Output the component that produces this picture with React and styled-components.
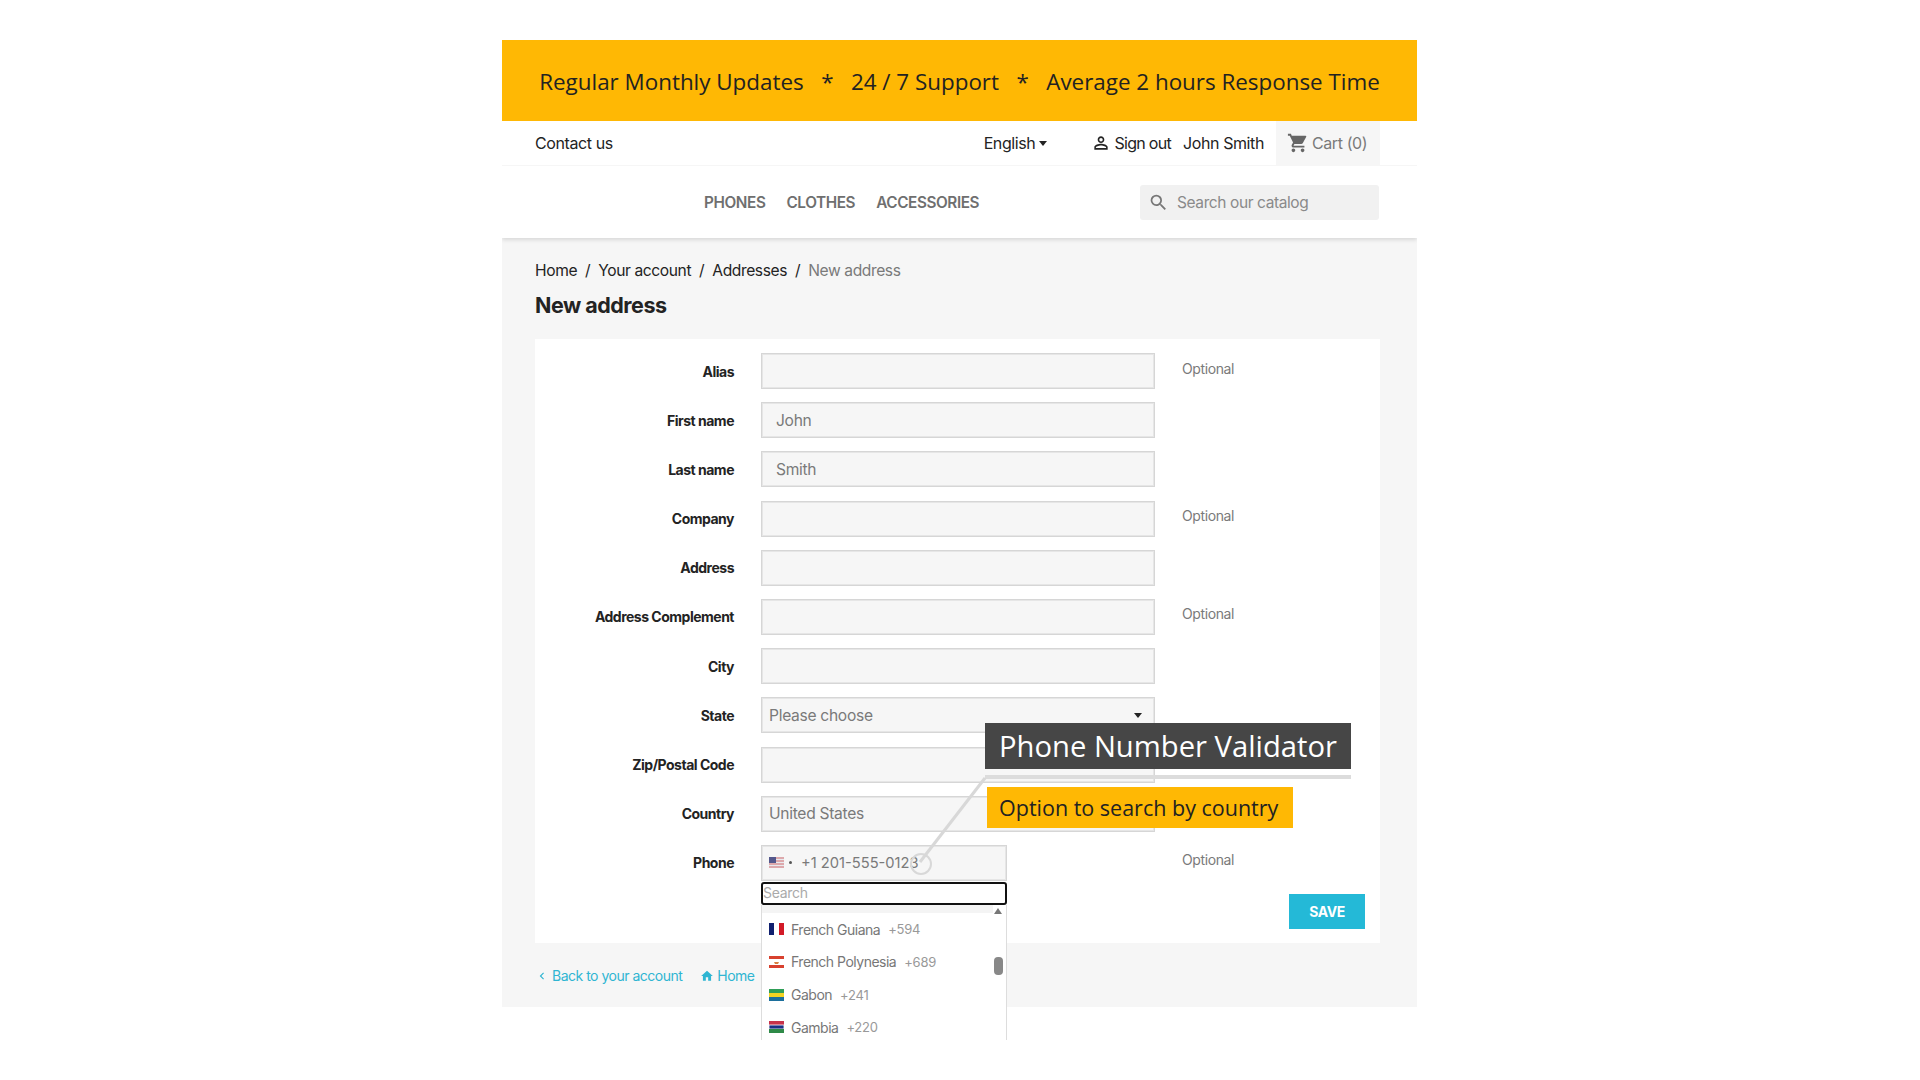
import React from 'react';
import styled, { createGlobalStyle } from 'styled-components';
import { MdPersonOutline, MdShoppingCart, MdSearch, MdHome, MdChevronLeft } from 'react-icons/md';

const Global = createGlobalStyle`
  html, body { margin: 0; background: #fff; }
  body { height: 1080px; overflow: hidden; font-family: Inter, "Liberation Sans", sans-serif; }
  * { box-sizing: border-box; }
`;

const Page = styled.div`
  width: 915px;
  margin: 40px 0 0 502px;
  background: #f6f6f6;
`;

const Banner = styled.div`
  height: 81px;
  padding-top: 1px;
  background: #ffb804;
  color: #222;
  font: 400 22.4px "Open Sans", sans-serif;
  display: flex;
  align-items: center;
  justify-content: center;
  white-space: pre;
`;

const Header = styled.header`
  background: #fff;
  box-shadow: 0 2px 4px rgba(0, 0, 0, 0.12);
  clip-path: inset(0 0 -8px 0);
  position: relative;
`;

const TopRow = styled.div`
  height: 45px;
  display: flex;
  align-items: center;
  padding: 0 37px 0 33px;
  border-bottom: 1px solid #f6f6f6;
  color: #232323;
  font-size: 16px;
  letter-spacing: -0.4px;
`;

const Language = styled.span`
  margin-left: auto;
  display: flex;
  align-items: center;
  gap: 4px;
`;

const Caret = styled.i`
  display: inline-block;
  width: 0;
  height: 0;
  border: 4px solid transparent;
  border-top: 5px solid ${p => p.color || '#232323'};
  border-bottom: 0;
`;

const SignOut = styled.span`
  margin-left: 44px;
  display: flex;
  align-items: center;
  gap: 3px;
  letter-spacing: -0.7px;
  svg { font-size: 20px; }
`;

const UserName = styled.span`
  margin-left: 12px;
`;

const Cart = styled.span`
  margin-left: 12px;
  width: 104px;
  height: 44px;
  background: #f6f6f6;
  color: #7a7a7a;
  display: flex;
  align-items: center;
  padding-left: 11px;
  gap: 3px;
  svg { font-size: 22px; color: #666; }
`;

const MainRow = styled.div`
  height: 72px;
  display: flex;
  align-items: center;
  padding: 0 38px 0 202px;
`;

const MenuLink = styled.a`
  color: #6f6f6f;
  font-size: 15.3px;
  font-weight: 600;
  letter-spacing: -0.4px;
  margin-right: 21px;
`;

const SearchBox = styled.div`
  margin-left: auto;
  width: 239px;
  height: 35px;
  border-radius: 3px;
  background: #f1f1f1;
  color: #8a8a8a;
  font-size: 15.5px;
  letter-spacing: -0.4px;
  display: flex;
  align-items: center;
  padding-left: 8px;
  gap: 8px;
  svg { font-size: 21px; color: #777; }
`;

const Main = styled.main`
  padding: 24px 37px 0 33px;
  height: 769px;
`;

const Crumbs = styled.nav`
  height: 18px;
  font-size: 15.6px;
  line-height: 18px;
  letter-spacing: -0.4px;
  color: #232323;
  white-space: pre;
`;

const CrumbCurrent = styled.span`
  color: #7a7a7a;
`;

const Title = styled.h1`
  margin: 12px 0 0;
  font-size: 21.5px;
  line-height: 26px;
  font-weight: 700;
  letter-spacing: -0.5px;
  color: #232323;
`;

const Card = styled.form`
  margin-top: 21px;
  width: 845px;
  height: 604px;
  background: #fff;
  padding: 14px 15px 14px 0;
  display: flex;
  flex-direction: column;
`;

const Rows = styled.div`
  display: grid;
  grid-template-columns: 199px 394px 1fr;
  column-gap: 27px;
  row-gap: 13.2px;
  align-items: center;
`;

const Label = styled.label`
  text-align: right;
  font-size: 14px;
  font-weight: 700;
  letter-spacing: -0.5px;
  color: #232323;
`;

const Field = styled.div`
  width: ${p => p.$width || '100%'};
  height: 36px;
  background: #f6f6f6;
  border: 1px solid #d6d6d6;
  box-shadow: inset 0 0 0 1px #e6e6e6;
  color: #7a7a7a;
  font-size: 15.6px;
  letter-spacing: -0.3px;
  display: flex;
  align-items: center;
  padding-left: ${p => p.$pad || 14}px;
  position: relative;
`;

const Optional = styled.span`
  font-size: 14px;
  letter-spacing: -0.4px;
  color: #7a7a7a;
  position: relative;
  top: -3px;
`;

const SelectCaret = styled.span`
  margin-left: auto;
  margin-right: 12px;
  display: flex;
`;

const PhoneCode = styled.span`
  margin-left: 9px;
  font-size: 14.7px;
  letter-spacing: 0;
  white-space: pre;
`;

const Dot = styled.i`
  width: 3px;
  height: 3px;
  margin-left: 5px;
  border-radius: 50%;
  background: #555;
`;

const Dropdown = styled.div`
  position: absolute;
  left: -1px;
  top: 35px;
  width: 246px;
  height: 159px;
  background: #fff;
  z-index: 2;
`;

const DropdownSearch = styled.div`
  height: 23px;
  margin-top: 1px;
  border: 2px solid #111;
  border-radius: 3px;
  background: #fff;
  color: #aaa;
  font-size: 14px;
  letter-spacing: -0.3px;
  line-height: 18px;
`;

const DropdownList = styled.ul`
  list-style: none;
  margin: 0;
  padding: 0;
  height: 135px;
  overflow: hidden;
  border-left: 1px solid #ddd;
  border-right: 1px solid #ddd;
  position: relative;
`;

const ListTop = styled.div`
  height: 8px;
  background: #f4f4f4;
  margin-right: 13px;
`;

const ListItem = styled.li`
  height: 32.7px;
  display: flex;
  align-items: center;
  padding-left: 7px;
  font-size: 14px;
  letter-spacing: -0.5px;
  color: #777;
  white-space: pre;
  svg { margin-right: 7px; flex: none; }
`;

const Dial = styled.span`
  margin-left: 8px;
  color: #999;
  font-size: 13px;
  letter-spacing: -0.2px;
`;

const ScrollUp = styled.i`
  position: absolute;
  right: 4px;
  top: 3px;
  width: 0;
  height: 0;
  border: 4.5px solid transparent;
  border-bottom: 6px solid #777;
  border-top: 0;
`;

const ScrollThumb = styled.i`
  position: absolute;
  right: 3px;
  top: 52px;
  width: 9px;
  height: 18px;
  border-radius: 4px;
  background: #888;
`;

const SaveRow = styled.div`
  display: flex;
  justify-content: flex-end;
  margin-top: 13px;
`;

const SaveButton = styled.button`
  width: 76px;
  height: 35px;
  border: 0;
  background: #24b9d7;
  color: #fff;
  font: 700 14px Inter, sans-serif;
  letter-spacing: -0.4px;
`;

const FootLinks = styled.div`
  margin-top: 24px;
  display: flex;
  align-items: center;
  color: #2fb5d2;
  font-size: 14px;
  letter-spacing: -0.5px;
`;

const FootLink = styled.a`
  display: flex;
  align-items: center;
  gap: 3px;
  margin-right: 18px;
  svg { font-size: 14px; }
`;

const CalloutTitle = styled.div`
  position: absolute;
  left: 985px;
  top: 723px;
  width: 366px;
  height: 46px;
  background: #464646;
  color: #fff;
  font: 400 29.2px "Open Sans", sans-serif;
  line-height: 46px;
  padding-left: 14px;
  white-space: nowrap;
  z-index: 3;
`;

const CalloutRule = styled.div`
  position: absolute;
  left: 985px;
  top: 775px;
  width: 366px;
  height: 4px;
  background: #dcdcdc;
  z-index: 3;
`;

const CalloutNote = styled.div`
  position: absolute;
  left: 987px;
  top: 787px;
  width: 306px;
  height: 41px;
  background: #ffb804;
  color: #222;
  font: 400 21.5px "Open Sans", sans-serif;
  line-height: 41px;
  padding-left: 12px;
  white-space: nowrap;
  z-index: 3;
`;

const Pointer = styled.svg`
  position: absolute;
  left: 900px;
  top: 770px;
  z-index: 3;
`;

const FlagUS = () => (
  <svg width="15" height="11" viewBox="0 0 15 11">
    <rect width="15" height="11" fill="#e9e9ee" />
    <path d="M0 1h15M0 4h15M0 7h15M0 10h15" stroke="#d26a6a" strokeWidth="1.2" />
    <rect width="7" height="6" fill="#54588c" />
  </svg>
);

const FlagFrance = () => (
  <svg width="15" height="12" viewBox="0 0 15 12">
    <rect width="5" height="12" fill="#10206f" />
    <rect x="5" width="5" height="12" fill="#fff" />
    <rect x="10" width="5" height="12" fill="#d21a27" />
  </svg>
);

const FlagPolynesia = () => (
  <svg width="15" height="12" viewBox="0 0 15 12">
    <rect width="15" height="12" fill="#fff" />
    <rect width="15" height="3" fill="#d8412f" />
    <rect y="9" width="15" height="3" fill="#d8412f" />
    <path d="M5 6h5l-1 2H6z" fill="#d8803f" />
  </svg>
);

const FlagGabon = () => (
  <svg width="15" height="12" viewBox="0 0 15 12">
    <rect width="15" height="4" fill="#2f9e57" />
    <rect y="4" width="15" height="4" fill="#f3d322" />
    <rect y="8" width="15" height="4" fill="#1c6f9c" />
  </svg>
);

const FlagGambia = () => (
  <svg width="15" height="12" viewBox="0 0 15 12">
    <rect width="15" height="4" fill="#c8324a" />
    <rect y="4" width="15" height="4" fill="#1b2f86" stroke="#fff" strokeWidth="0.8" />
    <rect y="8" width="15" height="4" fill="#2f8a48" />
  </svg>
);

const fields = [
  { label: 'Alias', optional: true },
  { label: 'First name', value: 'John' },
  { label: 'Last name', value: 'Smith' },
  { label: 'Company', optional: true },
  { label: 'Address' },
  { label: 'Address Complement', optional: true },
  { label: 'City' },
];

const countries = [
  { name: 'French Guiana', dial: '+594', Flag: FlagFrance },
  { name: 'French Polynesia', dial: '+689', Flag: FlagPolynesia },
  { name: 'Gabon', dial: '+241', Flag: FlagGabon },
  { name: 'Gambia', dial: '+220', Flag: FlagGambia },
];

export default function App() {
  return (
    <>
      <Global />
      <Page>
        <Banner>{'Regular Monthly Updates   *   24 / 7 Support   *   Average 2 hours Response Time'}</Banner>
        <Header>
          <TopRow>
            <span>Contact us</span>
            <Language>English <Caret /></Language>
            <SignOut><MdPersonOutline /> Sign out</SignOut>
            <UserName>John Smith</UserName>
            <Cart><MdShoppingCart /> Cart (0)</Cart>
          </TopRow>
          <MainRow>
            <MenuLink>PHONES</MenuLink>
            <MenuLink>CLOTHES</MenuLink>
            <MenuLink>ACCESSORIES</MenuLink>
            <SearchBox><MdSearch /> Search our catalog</SearchBox>
          </MainRow>
        </Header>
        <Main>
          <Crumbs>
            {'Home  /  Your account  /  Addresses  /  '}
            <CrumbCurrent>New address</CrumbCurrent>
          </Crumbs>
          <Title>New address</Title>
          <Card>
            <Rows>
              {fields.map(f => (
                <React.Fragment key={f.label}>
                  <Label>{f.label}</Label>
                  <Field>{f.value}</Field>
                  <Optional>{f.optional ? 'Optional' : ''}</Optional>
                </React.Fragment>
              ))}
              <Label>State</Label>
              <Field $pad={7}>Please choose<SelectCaret><Caret /></SelectCaret></Field>
              <span />
              <Label>Zip/Postal Code</Label>
              <Field />
              <span />
              <Label>Country</Label>
              <Field $pad={7}>United States</Field>
              <span />
              <Label>Phone</Label>
              <Field $width="246px" $pad={7}>
                <FlagUS />
                <Dot />
                <PhoneCode>+1 201-555-0123</PhoneCode>
                <Dropdown>
                  <DropdownSearch>Search</DropdownSearch>
                  <DropdownList>
                    <ListTop />
                    <ScrollUp />
                    <ScrollThumb />
                    {countries.map(({ name, dial, Flag }) => (
                      <ListItem key={name}>
                        <Flag />
                        {name}
                        <Dial>{dial}</Dial>
                      </ListItem>
                    ))}
                  </DropdownList>
                </Dropdown>
              </Field>
              <Optional>Optional</Optional>
            </Rows>
            <SaveRow><SaveButton type="button">SAVE</SaveButton></SaveRow>
          </Card>
          <FootLinks>
            <FootLink><MdChevronLeft /> Back to your account</FootLink>
            <FootLink><MdHome /> Home</FootLink>
          </FootLinks>
        </Main>
      </Page>
      <CalloutTitle>Phone Number Validator</CalloutTitle>
      <CalloutRule />
      <CalloutNote>Option to search by country</CalloutNote>
      <Pointer width="100" height="110">
        <path d="M85 8L20 92" stroke="#d8d8d8" strokeWidth="3" fill="none" />
        <circle cx="21" cy="94" r="10" fill="none" stroke="#d8d8d8" strokeWidth="2" />
      </Pointer>
    </>
  );
}
